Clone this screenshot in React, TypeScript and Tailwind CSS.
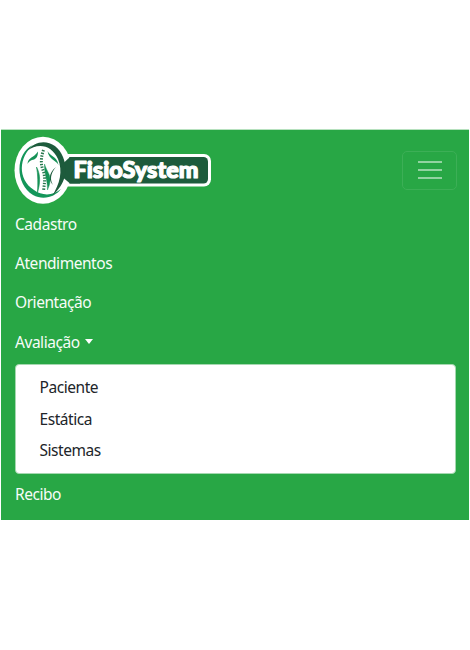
import React from "react";

function Logo() {
  return (
    <svg width="200" height="70" viewBox="12 135 200 70" className="block tracking-normal" role="img" aria-label="FisioSystem">
      <rect x="60" y="154" width="151" height="32.5" rx="7" fill="#fff" />
      <rect x="66" y="157" width="142" height="26.5" rx="4.5" fill="#1d5b3c" />
      <ellipse cx="43" cy="170.3" rx="28.5" ry="33.5" fill="#fff" />
      <path d="M70 157H80V183.5H70L63.5 178V163Z" fill="#1d5b3c" />
      <path d="M33 145C15 153 15 184 33 195C44 201 56 196 61 189C53 196 42 196 34 190C17 179 19 157 33 145Z" fill="#13965a" />
      <path d="M27 151C37 137 57 140 63 157C70 174 62 187 52 196C60 184 63 171 58 159C52 145 38 142 27 151Z" fill="#1d5b3c" />
      <path d="M27.5 164C28 157 34 158 38 151.5C38 158 35 159.5 32 160C29.5 161 28.5 162 27.5 164Z" fill="#159156" />
      <path d="M47.5 151C50 156.5 57 156 58.5 165C56 160 49 160 47.5 151Z" fill="#159156" />
      <path d="M36.5 167C41 175 40 184 37.5 192.5C38 184 38 174 36.5 167Z" fill="#159156" stroke="#159156" strokeWidth=".6" />
      <path d="M56 167C50 174 50 180 53 185C49 181 47.5 174 56 167Z" fill="#1d5b3c" />
      <path d="M44.5 164C47 172 50.5 174 50 180C50 185 48.5 187 47.5 190C48 182 44 173 44.5 164Z" fill="#159156" stroke="#159156" strokeWidth=".4" />
      <path d="M43.5 150C41 157 40.5 164 43 170C45.5 177 44.5 183 43.5 191" fill="none" stroke="#28784e" strokeWidth="3" strokeDasharray="1.4 1.4" />
      <text x="73.5" y="177.5" fontFamily="Lato, sans-serif" fontWeight="900" fontSize="23" fill="#fff" stroke="#fff" strokeWidth="1.2" strokeLinejoin="round" textLength="125" lengthAdjust="spacingAndGlyphs">FisioSystem</text>
    </svg>
  );
}

const linkClass = "block h-[39.2px] leading-[39.2px]";

export default function App() {
  return (
    <div className="h-[650px] w-[470px] bg-white pt-[129px] pl-px font-['Noto_Sans',sans-serif] text-[15.5px] tracking-[-0.45px]">
      <nav className="h-[391px] w-[468px] border-t border-[#b6e1be] bg-[#28a745] text-[#f7fcf8]">
        <div className="flex h-[75px] items-start justify-between pt-[5px] pr-3 pl-[11px]">
          <Logo />
          <button className="mt-[15.5px] flex h-[39px] w-[55px] items-center justify-center rounded-[5px] border border-[#3caf56]" aria-label="Menu">
            <svg width="24" height="20" viewBox="0 0 24 20" stroke="#93d3a1" strokeWidth="2">
              <path d="M0 2H24M0 10H24M0 18H24" />
            </svg>
          </button>
        </div>
        <div className="px-[14px]">
          <a className={linkClass}>Cadastro</a>
          <a className={linkClass}>Atendimentos</a>
          <a className={linkClass}>Orientação</a>
          <a className={`${linkClass} flex items-center`}>
            Avaliação
            <span className="mb-[2px] ml-[5px] h-0 w-0 border-x-[4.5px] border-t-[5px] border-x-transparent border-t-white" />
          </a>
          <div className="mt-[2px] mb-[1.6px] h-[110px] w-[441px] rounded-[4px] border border-[#a5d8b0] bg-white pt-[7.5px] pl-[23.5px] text-[#212529]">
            <a className="block h-[31.4px] leading-[31.4px]">Paciente</a>
            <a className="block h-[31.4px] leading-[31.4px]">Estática</a>
            <a className="block h-[31.4px] leading-[31.4px]">Sistemas</a>
          </div>
          <a className={linkClass}>Recibo</a>
        </div>
      </nav>
    </div>
  );
}
